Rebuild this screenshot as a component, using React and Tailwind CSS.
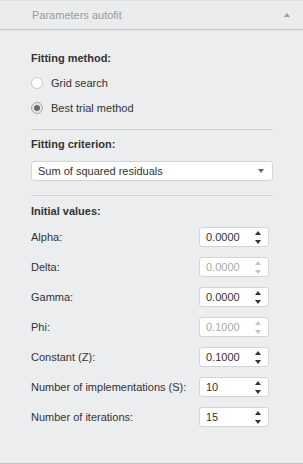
import React from 'react';

const Spin = ({ disabled }) => {
  const c = disabled ? '#c4c4c4' : '#333333';
  return (
    <div className="flex flex-col items-center gap-[5px] mr-[7px]">
      <svg width="6" height="4" viewBox="0 0 6 4"><path d="M3 0 L6 4 L0 4 Z" fill={c} /></svg>
      <svg width="6" height="4" viewBox="0 0 6 4"><path d="M0 0 L6 0 L3 4 Z" fill={c} /></svg>
    </div>
  );
};

const NumberField = ({ value, disabled }) => (
  <div className="w-[70px] h-[20px] mr-[4px] bg-white border border-[#d3d4d6] rounded-[3px] flex items-center justify-between">
    <span className={`pl-[6px] ${disabled ? 'text-[#a9a9a9]' : 'text-[#333]'}`}>{value}</span>
    <Spin disabled={disabled} />
  </div>
);

const Radio = ({ checked, label }) => (
  <div className="h-[25px] flex items-center">
    {checked ? (
      <span className="w-[12px] h-[12px] rounded-full border border-[#a8a8a8] bg-[#e6e6e6] flex items-center justify-center">
        <span className="w-[6px] h-[6px] rounded-full bg-[#6c6c6c]" />
      </span>
    ) : (
      <span className="w-[12px] h-[12px] rounded-full border border-[#c9c9c9] bg-white" />
    )}
    <span className="ml-[8px] text-[#333]">{label}</span>
  </div>
);

export default function App() {
  const rows = [
    ['Alpha:', '0.0000', false],
    ['Delta:', '0.0000', true],
    ['Gamma:', '0.0000', false],
    ['Phi:', '0.1000', true],
    ['Constant (Z):', '0.1000', false],
    ['Number of implementations (S):', '10', false],
    ['Number of iterations:', '15', false],
  ];

  return (
    <div className="w-[303px] h-[464px] bg-[#ecedef] border-b border-[#c2c2c2] text-[11px] leading-[14px] font-['Liberation_Sans',Arial,sans-serif]">
      {/* header */}
      <div className="h-[30px] border-t border-[#e1e2e4] border-b border-b-[#c9cacc] bg-[#ebeced] flex items-center justify-between pl-[32px] pr-[13px] shadow-[0_1px_0_#e2e3e5]">
        <span className="text-[#9a9a9a]">Parameters autofit</span>
        <svg width="6" height="4" viewBox="0 0 6 4"><path d="M3 0 L6 4 L0 4 Z" fill="#9a9a9a" /></svg>
      </div>

      <div className="pl-[31px] pr-[30px]">
        <div className="mt-[21px] font-bold text-[#333]">Fitting method:</div>
        <div className="mt-[5px]">
          <Radio label="Grid search" />
          <Radio checked label="Best trial method" />
        </div>
        <div className="mt-[9px] h-px bg-[#d0d1d3]" />

        <div className="mt-[7px] font-bold text-[#333]">Fitting criterion:</div>
        <div className="mt-[10px] h-[20px] bg-white border border-[#d3d4d6] rounded-[3px] flex items-center justify-between pl-[6px] pr-[8px]">
          <span className="text-[#333]">Sum of squared residuals</span>
          <svg width="6" height="4" viewBox="0 0 6 4"><path d="M0 0 L6 0 L3 4 Z" fill="#666" /></svg>
        </div>
        <div className="mt-[14px] h-px bg-[#d0d1d3]" />

        <div className="mt-[8px] font-bold text-[#333]">Initial values:</div>
        <div className="mt-[4px]">
          {rows.map(([label, value, disabled]) => (
            <div key={label} className="h-[30px] flex items-center justify-between">
              <span className="text-[#333]">{label}</span>
              <NumberField value={value} disabled={disabled} />
            </div>
          ))}
        </div>
      </div>
    </div>
  );
}
